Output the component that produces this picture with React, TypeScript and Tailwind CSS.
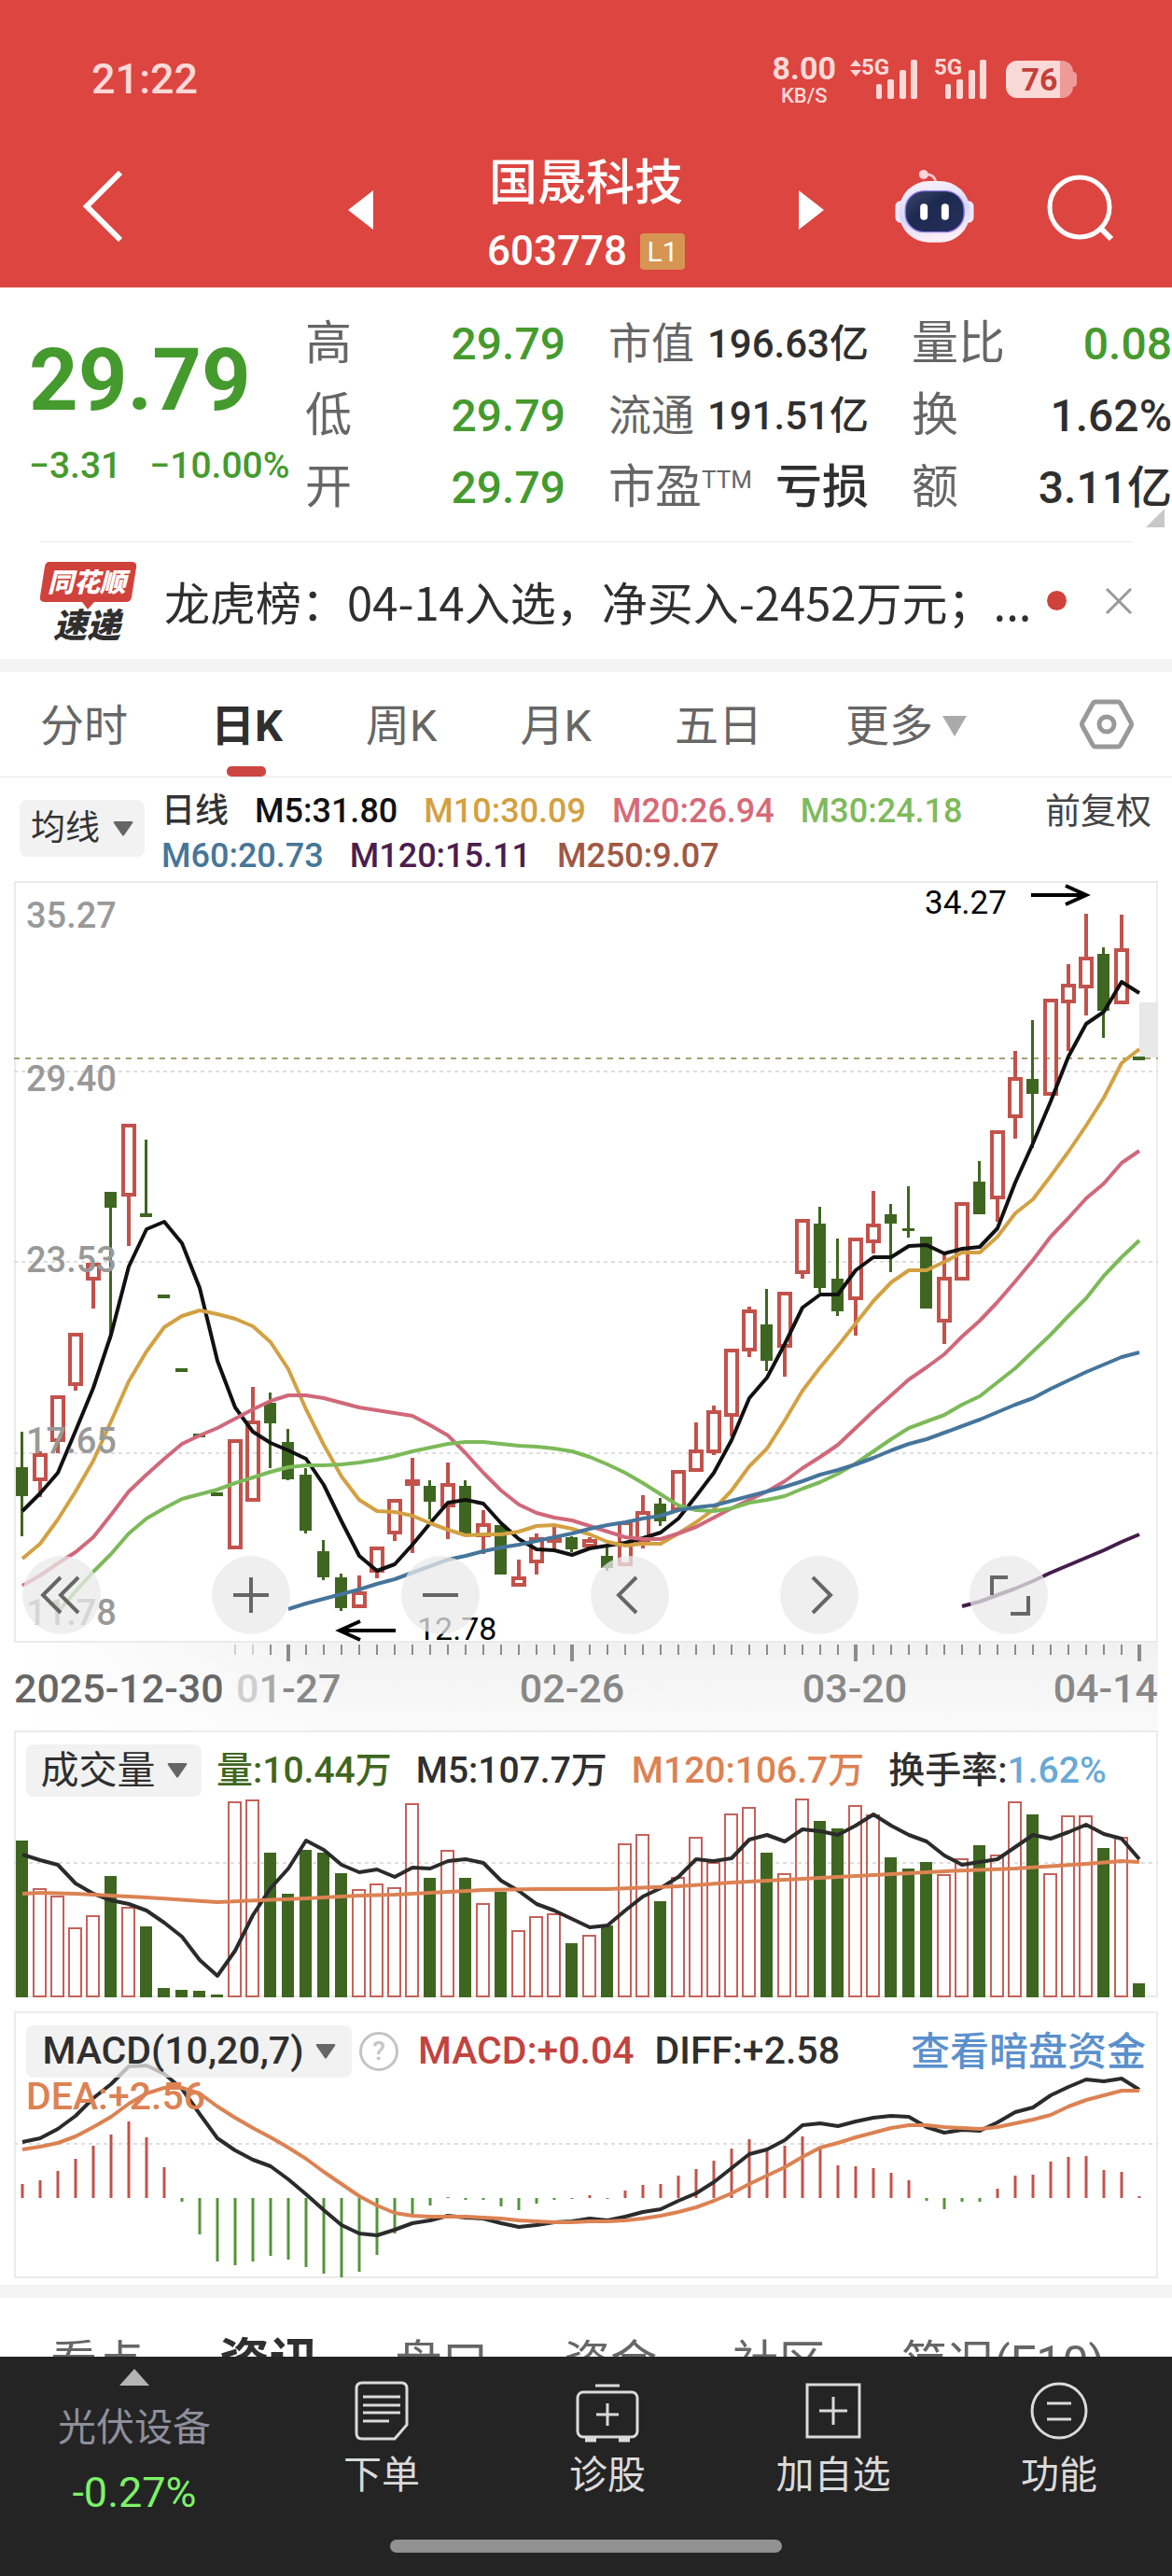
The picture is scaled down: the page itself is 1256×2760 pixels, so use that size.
import React from 'react';

type Candle = {
  up: boolean;
  high: number;
  top: number;
  bottom: number;
  low: number;
  solid?: boolean;
};

const RED = '#c2524b';
const GREEN = '#3f6621';
const STEP = 19;
const OFFSET = 9;

const cx = (i: number) => OFFSET + STEP * i;

const c = (dir: string, high: number, top: number, bottom: number, low: number): Candle => ({
  up: dir !== 'g',
  solid: dir === 's',
  high,
  top,
  bottom,
  low,
});

// high, body top, body bottom, low - in chart pixels from the top edge
const candles: Candle[] = [
  c('g', 590, 628, 659, 702),
  c('r', 611, 613, 643, 660),
  c('r', 551, 551, 601, 613),
  c('r', 484, 484, 541, 546),
  c('r', 409, 409, 428, 458),
  c('g', 333, 333, 350, 491),
  c('r', 260, 260, 338, 391),
  c('g', 277, 356, 360, 360),
  c('g', 443, 443, 447, 447),
  c('g', 522, 522, 526, 526),
  c('g', 592, 592, 596, 596),
  c('g', 655, 655, 659, 659),
  c('r', 598, 598, 716, 716),
  c('r', 542, 578, 665, 665),
  c('g', 548, 559, 581, 629),
  c('g', 587, 601, 641, 642),
  c('g', 629, 636, 696, 699),
  c('g', 706, 718, 746, 749),
  c('g', 742, 746, 779, 782),
  c('r', 744, 761, 779, 779),
  c('r', 713, 713, 741, 747),
  c('r', 662, 662, 700, 707),
  c('s', 618, 641, 648, 720),
  c('g', 642, 648, 665, 684),
  c('r', 623, 645, 671, 705),
  c('g', 642, 648, 701, 701),
  c('r', 674, 688, 703, 721),
  c('g', 690, 690, 743, 743),
  c('r', 727, 745, 756, 756),
  c('r', 699, 703, 731, 743),
  c('s', 691, 703, 708, 716),
  c('g', 702, 703, 716, 719),
  c('r', 703, 705, 714, 714),
  c('g', 714, 723, 736, 739),
  c('r', 686, 686, 734, 734),
  c('r', 658, 675, 709, 715),
  c('g', 661, 667, 686, 691),
  c('r', 631, 631, 675, 675),
  c('r', 580, 609, 633, 633),
  c('r', 562, 567, 613, 615),
  c('r', 501, 501, 574, 595),
  c('r', 456, 459, 504, 510),
  c('g', 437, 475, 514, 525),
  c('r', 440, 440, 500, 531),
  c('r', 362, 362, 421, 426),
  c('g', 349, 367, 436, 441),
  c('g', 383, 426, 461, 466),
  c('r', 382, 382, 449, 487),
  c('r', 332, 367, 388, 399),
  c('g', 346, 357, 367, 419),
  c('g', 327, 372, 375, 382),
  c('g', 381, 381, 458, 458),
  c('r', 399, 424, 473, 496),
  c('r', 344, 344, 428, 428),
  c('g', 300, 322, 357, 357),
  c('r', 267, 267, 341, 365),
  c('r', 182, 210, 254, 276),
  c('g', 149, 212, 228, 286),
  c('r', 126, 126, 230, 230),
  c('r', 89, 110, 131, 182),
  c('r', 35, 81, 115, 144),
  c('g', 71, 78, 139, 168),
  c('r', 36, 72, 132, 132),
  c('g', 188, 188, 192, 192),
];

const ma5 = [
  675, 656, 634, 589, 543, 486, 413, 373, 365, 388, 436, 514, 564, 590, 602, 610, 619, 647, 686, 723, 739, 732, 711,
  688, 666, 663, 667, 688, 705, 716, 717, 722, 715, 712, 709, 704, 698, 683, 659, 634, 599, 554, 532, 496, 457, 443,
  443, 417, 403, 403, 391, 390, 399, 394, 392, 372, 323, 281, 236, 188, 153, 140, 108, 120,
];
const ma10 = [
  726, 710, 684, 654, 621, 579, 536, 504, 478, 466, 460, 464, 469, 477, 494, 523, 566, 604, 638, 663, 675, 676, 680,
  688, 695, 701, 700, 700, 697, 691, 690, 694, 700, 708, 712, 710, 710, 699, 687, 673, 653, 627, 608, 578, 546, 521,
  498, 474, 450, 430, 417, 417, 408, 398, 398, 381, 356, 341, 316, 290, 262, 232, 195, 180,
];
const ma20 = [
  755, 744, 731, 719, 703, 679, 654, 636, 619, 603, 594, 586, 576, 566, 557, 551, 551, 554, 559, 564, 567, 570, 573,
  583, 594, 613, 634, 653, 668, 677, 682, 685, 691, 697, 703, 705, 705, 699, 692, 682, 672, 663, 654, 643, 629, 617,
  604, 586, 568, 551, 534, 521, 507, 488, 471, 451, 429, 406, 381, 361, 340, 324, 302, 289,
];
const ma30 = [
  783, 761, 740, 721, 699, 683, 672, 662, 657, 652, 645, 639, 633, 628, 626, 626, 625, 623, 620, 616, 611, 607, 603,
  601, 601, 603, 605, 606, 608, 611, 617, 625, 634, 645, 657, 669, 674, 675, 672, 666, 663, 659, 651, 644, 635, 624,
  611, 598, 586, 579, 572, 561, 552, 537, 522, 504, 486, 466, 447, 423, 403, 385,
];
const ma60 = [
  780, 774, 769, 764, 759, 753, 748, 741, 734, 727, 723, 718, 714, 711, 707, 703, 699, 694, 690, 687, 683, 680, 674,
  671, 669, 664, 659, 654, 649, 643, 636, 631, 625, 618, 610, 603, 598, 591, 584, 577, 569, 561, 554, 544, 535, 526,
  518, 510, 505,
];
const ma120 = [777, 772, 765, 758, 750, 741, 733, 725, 717, 708, 700];

const volumes = [
  118, 169, 177, 211, 198, 156, 189, 210, 276, 278, 279, 283, 76, 74, 131, 175, 128, 131, 153, 170, 164, 168, 78, 158,
  128, 158, 185, 173, 214, 199, 196, 228, 219, 209, 121, 111, 183, 157, 114, 141, 89, 82, 131, 153, 73, 97, 105, 80,
  90, 136, 148, 141, 154, 137, 123, 133, 76, 90, 153, 91, 91, 126, 114, 271,
];
const volMa5 = [
  133, 139, 144, 164, 175, 182, 186, 193, 206, 221, 246, 263, 236, 198, 169, 148, 118, 128, 144, 152, 149, 157, 147,
  148, 140, 138, 142, 161, 172, 186, 193, 202, 211, 209, 193, 178, 169, 157, 138, 140, 137, 117, 112, 119, 106, 108,
  112, 102, 90, 102, 112, 119, 134, 144, 141, 138, 125, 112, 116, 109, 101, 111, 116, 138,
];
const volMa120: [number, number][] = [
  [0, 175], [1, 174], [3, 175], [7, 179], [11, 184], [16, 180], [19, 177], [21, 176], [24, 173], [26, 171], [29, 170],
  [33, 170], [37, 167], [40, 163], [44, 159], [48, 155], [52, 151], [56, 148], [60, 143], [62, 140], [63, 141],
];

const macdBars = [
  185, 181, 171, 158, 144, 132, 118, 135, 167, 204, 239, 268, 272, 268, 262, 266, 274, 281, 285, 279, 261, 238, 218,
  208, 199, 202, 202, 209, 213, 206, 202, 201, 197, 201, 192, 186, 185, 176, 169, 160, 147, 137, 148, 144, 134, 147,
  165, 166, 168, 173, 181, 203, 212, 204, 204, 190, 176, 175, 161, 156, 155, 170, 172, 198,
];
const diff = [
  140, 136, 126, 112, 93, 78, 59, 58, 67, 83, 110, 136, 149, 159, 166, 180, 196, 213, 229, 238, 240, 234, 227, 224,
  219, 221, 222, 227, 231, 229, 226, 225, 222, 224, 220, 215, 212, 203, 195, 183, 168, 153, 148, 138, 122, 120, 123,
  118, 114, 112, 113, 124, 130, 127, 128, 119, 108, 103, 90, 81, 73, 75, 72, 84,
];
const dea = [
  148, 145, 141, 134, 124, 113, 99, 88, 82, 82, 88, 102, 114, 125, 135, 146, 158, 172, 185, 198, 208, 216, 219, 220,
  220, 220, 221, 222, 224, 225, 226, 226, 225, 225, 224, 222, 219, 215, 210, 203, 195, 185, 176, 167, 156, 146, 141,
  135, 130, 125, 122, 122, 124, 125, 126, 124, 120, 116, 111, 102, 95, 90, 85, 85,
];

const Line = ({ data, color, start = 0 }: { data: number[]; color: string; start?: number }) => (
  <polyline
    points={data.map((y, i) => `${cx(i + start)},${y}`).join(' ')}
    fill="none"
    stroke={color}
    strokeWidth="4"
    strokeLinejoin="round"
  />
);

const Caret = ({ className = '' }: { className?: string }) => (
  <svg viewBox="0 0 22 16" className={`w-[22px] h-4 ${className}`} fill="currentColor">
    <path d="M2 0h18q2 0 1 2L12 15q-1 1-2 0L1 2Q0 0 2 0z" />
  </svg>
);

const Signal = () => (
  <svg viewBox="0 0 44 42" className="w-11 h-[42px]" fill="currentColor">
    <rect x="0" y="26" width="6" height="16" rx="2" />
    <rect x="12" y="21" width="7" height="21" rx="2" />
    <rect x="25" y="11" width="7" height="31" rx="2" />
    <rect x="37" y="0" width="7" height="42" rx="2" />
  </svg>
);

const StatusBar = () => (
  <div className="flex items-center h-[150px] pt-5 pl-[98px] pr-[102px] text-[#fbd9d7]">
    <span className="text-[45px] leading-[50px] font-medium">21:22</span>
    <div className="ml-auto flex items-center">
      <div className="flex flex-col items-center font-bold">
        <span className="text-[34px] leading-9">8.00</span>
        <span className="text-[22px] leading-6 font-medium">KB/S</span>
      </div>
      <div className="relative ml-[43px]">
        <Signal />
        <span className="absolute -left-4 -top-1 text-[24px] leading-6 font-bold">5G</span>
        <svg viewBox="0 0 12 18" className="absolute -left-7 top-0 w-3 h-[18px]" fill="currentColor">
          <path d="M6 0l6 7H0zM6 18l6-7H0z" />
        </svg>
      </div>
      <div className="relative ml-[30px]">
        <Signal />
        <span className="absolute -left-3 -top-1 text-[24px] leading-6 font-bold">5G</span>
      </div>
      <div className="ml-[21px] flex items-center">
        <div className="w-[72px] h-10 rounded-[12px] bg-[linear-gradient(to_right,#fbd9d7_58px,#ee9a97_58px)] flex items-center justify-center">
          <span className="text-[34px] leading-10 font-bold text-[#c2403b]">76</span>
        </div>
        <div className="w-1 h-4 rounded-r bg-[#ee9a97]" />
      </div>
    </div>
  </div>
);

const Robot = () => (
  <svg viewBox="38 25 260 240" className="w-[87px] h-20">
    <defs>
      <linearGradient id="shell" x1="0" y1="0" x2="0.2" y2="1">
        <stop offset="0" stopColor="#fdf3fa" />
        <stop offset="0.6" stopColor="#d6d8fa" />
        <stop offset="1" stopColor="#fbeef6" />
      </linearGradient>
      <linearGradient id="visor" x1="0" y1="0" x2="1" y2="1">
        <stop offset="0" stopColor="#3d466b" />
        <stop offset="0.4" stopColor="#1d2a50" />
        <stop offset="1" stopColor="#26305c" />
      </linearGradient>
    </defs>
    <path d="M172 70q-2-30-38-28" fill="none" stroke="#f9c6cc" strokeWidth="8" />
    <circle cx="133" cy="43" r="15" fill="#fbd5da" />
    <rect x="42" y="128" width="40" height="70" rx="16" fill="#f3e6f8" />
    <rect x="254" y="128" width="40" height="70" rx="16" fill="#f3e6f8" />
    <rect x="54" y="64" width="228" height="197" rx="96" fill="url(#shell)" />
    <rect x="74" y="96" width="189" height="132" rx="60" fill="url(#visor)" stroke="#8b7be8" strokeWidth="4" />
    <rect x="122" y="137" width="24" height="52" rx="12" fill="#fff" />
    <rect x="190" y="137" width="24" height="52" rx="12" fill="#fff" />
  </svg>
);

const TitleBar = () => (
  <div className="flex items-center h-[158px] pl-[88px] pr-[62px]">
    <button aria-label="返回" className="pb-4">
      <svg viewBox="0 0 44 76" className="w-11 h-[76px]" fill="none" stroke="#fff" strokeWidth="6">
        <path d="M41 2L5 38l36 36" />
      </svg>
    </button>
    <div className="ml-auto flex items-center w-[510px] justify-between">
      <button aria-label="上一只" className="pb-2">
        <svg viewBox="0 0 27 42" className="w-[27px] h-[42px]" fill="#fff"><path d="M27 0v42L0 21z" /></svg>
      </button>
      <div className="flex flex-col items-center text-white pt-1">
        <h1 className="text-[52px] leading-[76px] font-medium">国晟科技</h1>
        <div className="flex items-center gap-3.5 h-[68px]">
          <span className="text-[44px] leading-[50px] font-medium">603778</span>
          <span className="w-12 h-[39px] rounded-[4px] bg-[#d69553] text-[30px] leading-[39px] text-center">L1</span>
        </div>
      </div>
      <button aria-label="下一只" className="pb-2">
        <svg viewBox="0 0 27 42" className="w-[27px] h-[42px]" fill="#fff"><path d="M0 0v42l27-21z" /></svg>
      </button>
    </div>
    <button aria-label="智能助手" className="ml-[75px] pb-4"><Robot /></button>
    <button aria-label="搜索" className="ml-[77px] pb-3">
      <svg viewBox="0 0 72 72" className="w-[72px] h-[72px]" fill="none" stroke="#fff" strokeWidth="5">
        <circle cx="35" cy="35" r="32" />
        <path d="M57 57l12 12" strokeWidth="6" />
      </svg>
    </button>
  </div>
);

const Stat = ({ label, sup, value, className = 'text-[#2f2f2f]' }: { label: string; sup?: string; value: string; className?: string }) => (
  <div className="flex items-center justify-between h-[77px] whitespace-nowrap">
    <dt className="text-[50px] leading-[77px] text-[#666] flex">
      {label}
      {sup && <sup className="text-[26px] leading-[60px] top-0">{sup}</sup>}
    </dt>
    <dd className={`leading-[77px] font-medium ${className}`}>{value}</dd>
  </div>
);

const Quote = () => (
  <section className="relative flex pt-[22px] pb-[19px]">
    <div className="w-[327px] shrink-0 pl-[31px] pt-6 text-[#459a2e] whitespace-nowrap">
      <p className="text-[92px] leading-[108px] font-bold">29.79</p>
      <p className="mt-3 flex gap-[30px] text-[39px] leading-[50px] font-medium">
        <span>−3.31</span>
        <span>−10.00%</span>
      </p>
    </div>
    <dl className="flex-1 grid grid-cols-3 gap-x-[46px]">
      <div>
        <Stat label="高" value="29.79" className="text-[48px] text-[#459a2e]" />
        <Stat label="低" value="29.79" className="text-[48px] text-[#459a2e]" />
        <Stat label="开" value="29.79" className="text-[48px] text-[#459a2e]" />
      </div>
      <div>
        <div className="[&_dt]:text-[46px]">
          <Stat label="市值" value="196.63亿" className="text-[42px] text-[#2f2f2f]" />
          <Stat label="流通" value="191.51亿" className="text-[42px] text-[#2f2f2f]" />
        </div>
        <Stat label="市盈" sup="TTM" value="亏损" className="text-[50px] text-[#2f2f2f]" />
      </div>
      <div>
        <Stat label="量比" value="0.08" className="text-[48px] text-[#459a2e]" />
        <Stat label="换" value="1.62%" className="text-[48px] text-[#2f2f2f]" />
        <Stat label="额" value="3.11亿" className="text-[48px] text-[#2f2f2f]" />
      </div>
    </dl>
    <svg viewBox="0 0 20 20" className="absolute right-2 bottom-[15px] w-5 h-5" fill="#c8c8c8"><path d="M20 0v20H0z" /></svg>
  </section>
);

const Notice = () => (
  <section className="flex items-center h-[126px] mx-[43px] border-t border-[#e8e8e8]">
    <svg viewBox="0 0 104 86" className="w-[104px] h-[86px] shrink-0" aria-label="同花顺速递">
      <path d="M10 1h88q6 0 5 6l-5 32q-1 5-6 5H58l-7 8-6-8H5q-6 0-5-6L5 6q1-5 5-5z" fill="#d0423c" />
      <text x="50" y="33" textAnchor="middle" fontSize="28" fontWeight="900" fontStyle="italic" fill="#fff">同花顺</text>
      <text x="50" y="82" textAnchor="middle" fontSize="36" fontWeight="900" fontStyle="italic" fill="#2f2f2f">速递</text>
    </svg>
    <p className="ml-[29px] flex-1 truncate font-['Noto_Sans_CJK_SC',sans-serif] text-[49px] leading-[76px] text-[#2f2f2f]">
      龙虎榜：04-14入选，净买入-2452万元；...
    </p>
    <span className="w-[21px] h-[21px] shrink-0 rounded-full bg-[#d0423c]" />
    <button aria-label="关闭" className="ml-[42px]">
      <svg viewBox="0 0 28 28" className="w-7 h-7" stroke="#999" strokeWidth="3"><path d="M1 1l26 26M27 1L1 27" /></svg>
    </button>
  </section>
);

const periods = ['分时', '日K', '周K', '月K', '五日'];

const PeriodTabs = () => (
  <nav className="flex h-[113px] pl-[43px] pr-[41px] gap-[89px] items-stretch border-b border-[#e6e6e6] text-[47px] text-[#666]">
    {periods.map((p) => (
      <button key={p} className={p === '日K' ? 'relative pt-1 font-bold text-[#2f2f2f]' : 'pt-1'}>
        {p}
        {p === '日K' && <span className="absolute left-1/2 -translate-x-1/2 bottom-0 w-[42px] h-[11px] rounded-[5px] bg-[#cc4540]" />}
      </button>
    ))}
    <button className="flex items-center gap-2.5 pt-1">
      更多
      <svg viewBox="0 0 26 22" className="w-[26px] h-[22px]" fill="#aaa"><path d="M0 0h26L13 22z" /></svg>
    </button>
    <button aria-label="设置" className="ml-auto">
      <svg viewBox="0 0 58 54" className="w-[58px] h-[54px]" fill="none" stroke="#999" strokeWidth="5" strokeLinejoin="round">
        <path d="M17 3h24q2 0 3 2l11 20q1 2 0 4L44 49q-1 2-3 2H17q-2 0-3-2L3 29q-1-2 0-4L14 5q1-2 3-2z" />
        <circle cx="29" cy="27" r="8" />
      </svg>
    </button>
  </nav>
);

const Legend = () => (
  <div className="flex items-start h-[111px] pt-3 pl-[21px] pr-[22px]">
    <button className="mt-3 h-[61px] w-[134px] shrink-0 rounded-lg bg-[#f2f2f2] flex items-center justify-center gap-3.5 text-[37px] text-[#333]">
      均线
      <Caret className="text-[#666]" />
    </button>
    <div className="ml-[18px] flex-1 text-[36px] leading-[48px] font-medium whitespace-nowrap">
      <div className="flex gap-7">
        <span className="text-[#333]">日线</span>
        <span className="text-[#111]">M5:31.80</span>
        <span className="text-[#d3a142]">M10:30.09</span>
        <span className="text-[#d66a78]">M20:26.94</span>
        <span className="text-[#7fba5c]">M30:24.18</span>
      </div>
      <div className="flex gap-7">
        <span className="text-[#477699]">M60:20.73</span>
        <span className="text-[#4a1e4f]">M120:15.11</span>
        <span className="text-[#a05844]">M250:9.07</span>
      </div>
    </div>
    <button className="text-[38px] leading-[48px] text-[#444]">前复权</button>
  </div>
);

const priceLabels = [
  { y: 50, text: '35.27' },
  { y: 225, text: '29.40' },
  { y: 419, text: '23.53' },
  { y: 613, text: '17.65' },
  { y: 797, text: '11.78' },
];

const tools = [
  { name: '最早', d: 'M41 29L22 48l19 19M60 29L41 48l19 19' },
  { name: '放大', d: 'M42 23v38M23 42h38' },
  { name: '缩小', d: 'M23 42h38' },
  { name: '左移', d: 'M49 23L30 42l19 19' },
  { name: '右移', d: 'M35 23l19 19-19 19' },
  { name: '全屏', d: 'M41 23H24v19M44 62h19V43' },
];

const KLine = () => (
  <div className="relative mx-[15px]">
    <svg viewBox="0 0 1226 816" className="block w-full">
      <rect x="1" y="1" width="1224" height="814" fill="none" stroke="#ebebeb" strokeWidth="2" />
      {[204, 408, 613].map((y) => (
        <line key={y} x1="0" x2="1226" y1={y} y2={y} stroke="#dedede" strokeWidth="2" strokeDasharray="4 4" />
      ))}
      <rect x="1206" y="130" width="20" height="59" fill="#e8e8e8" />
      <line x1="0" x2="1226" y1="190" y2="190" stroke="#a3a473" strokeWidth="2" strokeDasharray="6 6" />
      {candles.map((k, i) =>
        k.up ? (
          <g key={i} stroke={RED} strokeWidth="4" fill={k.solid ? RED : 'none'}>
            {k.high < k.top && <line x1={cx(i)} x2={cx(i)} y1={k.high} y2={k.top} />}
            {k.low > k.bottom && <line x1={cx(i)} x2={cx(i)} y1={k.bottom} y2={k.low} />}
            <rect x={cx(i) - 6} y={k.top + 2} width="12" height={Math.max(k.bottom - k.top - 4, 2)} />
          </g>
        ) : (
          <g key={i} fill={GREEN}>
            <rect x={cx(i) - 2} y={k.high} width="3" height={k.low - k.high} />
            <rect x={cx(i) - 7} y={k.top} width="13" height={k.bottom - k.top} />
          </g>
        )
      )}
      <Line data={ma5} color="#111" />
      <Line data={ma10} color="#d3a142" />
      <Line data={ma20} color="#d0687a" />
      <Line data={ma30} color="#7cba59" start={2} />
      <Line data={ma60} color="#45759b" start={15} />
      <Line data={ma120} color="#451c4c" start={53} />
      {priceLabels.map((p) => (
        <text key={p.text} x="13" y={p.y} fontSize="38" fontWeight="500" fill="#999">{p.text}</text>
      ))}
      <text x="976" y="35" fontSize="35" fill="#000">34.27</text>
      <path d="M1090 15h58M1127 5l22 10-22 10" fill="none" stroke="#000" strokeWidth="4" />
      <text x="432" y="813" fontSize="34" fill="#000">12.78</text>
      <path d="M409 803h-58M371 793l-22 10 22 10" fill="none" stroke="#000" strokeWidth="4" />
    </svg>
    <div className="absolute left-[9px] right-[118px] bottom-[9px] flex justify-between">
      {tools.map((t) => (
        <button key={t.name} aria-label={t.name} className="w-[84px] h-[84px] rounded-full bg-[#e9e9e9]/75">
          <svg
            viewBox={t.name === '最早' ? '0 6 84 84' : '0 0 84 84'}
            className="w-full h-full"
            fill="none"
            stroke="#666"
            strokeWidth="4"
          >
            <path d={t.d} />
          </svg>
        </button>
      ))}
    </div>
  </div>
);

const DateAxis = () => (
  <div className="mx-[15px] bg-[linear-gradient(to_right,#fff,transparent_30%),linear-gradient(to_bottom,#f1f1f1,#fafafa)]">
    <svg viewBox="0 0 1226 94" className="block w-full" fontSize="43" fontWeight="500" fill="#888">
      {candles.map((_, i) => {
        if (i < 12) return null;
        const major = i % 16 === 15;
        return (
          <line
            key={i}
            x1={cx(i)}
            x2={cx(i)}
            y1="2"
            y2={major ? 20 : 13}
            stroke={i < 14 ? '#d0d0d0' : '#8c8c8c'}
            strokeWidth={major ? 4 : 2}
          />
        );
      })}
      <text x="0" y="64" fill="#666">2025-12-30</text>
      <text x="238" y="64"><tspan fill="#cfcfcf">0</tspan><tspan fill="#aaa">1</tspan>-27</text>
      <text x="598" y="64" textAnchor="middle">02-26</text>
      <text x="901" y="64" textAnchor="middle">03-20</text>
      <text x="1226" y="64" textAnchor="end">04-14</text>
    </svg>
  </div>
);

const Volume = () => (
  <section className="relative mx-[15px]">
    <svg viewBox="0 0 1226 286" className="block w-full">
      <rect x="1" y="1" width="1224" height="284" fill="none" stroke="#ebebeb" strokeWidth="2" />
      <line x1="0" x2="1226" y1="142" y2="142" stroke="#dedede" strokeWidth="2" strokeDasharray="4 4" />
      {volumes.map((y, i) =>
        candles[i].up ? (
          <rect key={i} x={cx(i) - 7} y={y + 1} width="13" height={284 - y} fill="none" stroke="#c4625b" strokeWidth="2" />
        ) : (
          <rect key={i} x={cx(i) - 7} y={y} width="13" height={286 - y} fill={GREEN} />
        )
      )}
      <Line data={volMa5} color="#2b2b2b" />
      <polyline
        points={volMa120.map(([i, y]) => `${cx(i)},${y}`).join(' ')}
        fill="none"
        stroke="#dc8253"
        strokeWidth="4"
      />
    </svg>
    <div className="absolute left-[13px] top-[15px] flex items-center gap-[26px] text-[39px] leading-[56px] font-medium whitespace-nowrap text-[#2f2f2f]">
      <button className="h-14 w-[188px] -mr-2.5 rounded-lg bg-[#ededed]/75 flex items-center justify-center gap-3 text-[41px] font-normal">
        成交量
        <Caret className="text-[#666]" />
      </button>
      <span className="text-[#3f6621]">量:10.44万</span>
      <span>M5:107.7万</span>
      <span className="text-[#dc8253]">M120:106.7万</span>
      <span>换手率:<span className="text-[#68a9d6]">1.62%</span></span>
    </div>
  </section>
);

const Macd = () => (
  <section className="relative mx-[15px] mt-[15px]">
    <svg viewBox="0 0 1226 286" className="block w-full">
      <rect x="1" y="1" width="1224" height="284" fill="none" stroke="#ebebeb" strokeWidth="2" />
      <line x1="0" x2="1226" y1="142" y2="142" stroke="#dedede" strokeWidth="2" strokeDasharray="4 4" />
      {macdBars.map((y, i) => (
        <line key={i} x1={cx(i)} x2={cx(i)} y1="200" y2={y} stroke={y < 200 ? '#c2524b' : '#54953a'} strokeWidth="3" />
      ))}
      <Line data={diff} color="#2b2b2b" />
      <Line data={dea} color="#dc8253" />
    </svg>
    <div className="absolute inset-x-0 top-[15px] px-[13px] text-[41px] font-medium text-[#2f2f2f] whitespace-nowrap">
      <div className="flex items-center h-14">
        <button className="h-14 w-[349px] rounded-lg bg-[#ededed]/75 flex items-center justify-center gap-3 text-[#2f2f2f]">
          MACD(10,20,7)
          <Caret className="text-[#666]" />
        </button>
        <button aria-label="说明" className="ml-2 w-[42px] h-[42px] rounded-full border-[3px] border-[#c4c4c4] text-[28px] leading-9 text-[#c4c4c4]">?</button>
        <span className="ml-[21px] text-[#c2433f]">MACD:+0.04</span>
        <span className="ml-[22px]">DIFF:+2.58</span>
        <a href="#" className="ml-auto text-[42px] text-[#5b90cc]">查看暗盘资金</a>
      </div>
      <p className="leading-[40px] text-[#dc8253]">DEA:+2.56</p>
    </div>
  </section>
);

const sections = ['看点', '资讯', '盘口', '资金', '社区', '简况(F10)'];

const SectionTabs = () => (
  <nav className="flex justify-between items-start h-[63px] pt-[34px] pl-[54px] pr-[72px] overflow-hidden text-[50px] leading-[72px] text-[#666]">
    {sections.map((s) => (
      <button key={s} className={s === '资讯' ? 'text-[54px] font-bold text-[#2f2f2f]' : ''}>{s}</button>
    ))}
  </nav>
);

const actions = [
  {
    label: '下单',
    icon: (
      <>
        <path d="M11 3h42q6 0 6 6v39L46 63H11q-6 0-6-6V9q0-6 6-6z" />
        <path d="M12 18h40M12 27h40M12 35h40M12 44h28" strokeWidth="3" />
      </>
    ),
  },
  {
    label: '诊股',
    icon: (
      <>
        <path d="M19 6h26" />
        <rect x="0" y="13" width="64" height="48" rx="6" />
        <path d="M32 25v24M20 37h24" />
        <path d="M8 64h12M44 64h12" strokeWidth="5" />
      </>
    ),
  },
  {
    label: '加自选',
    icon: (
      <>
        <rect x="4" y="5" width="56" height="56" />
        <path d="M32 18v30M17 33h30" />
      </>
    ),
  },
  {
    label: '功能',
    icon: (
      <>
        <circle cx="32" cy="33" r="29" />
        <path d="M19 25h26M19 42h26" />
      </>
    ),
  },
];

const BottomBar = () => (
  <footer className="bg-[#242424] h-[235px] text-[41px]">
    <div className="flex h-[196px]">
      <button className="w-[288px] flex flex-col items-center pt-[13px]">
        <svg viewBox="0 0 32 18" className="w-8 h-[18px]" fill="#b4b4b4"><path d="M16 0l16 18H0z" /></svg>
        <span className="mt-[15px] leading-[60px] text-[#8f8f9c]">光伏设备</span>
        <span className="mt-3 text-[45px] leading-[56px] text-[#7df267]">-0.27%</span>
      </button>
      {actions.map((a) => (
        <button key={a.label} className="flex-1 flex flex-col items-center pt-[25px] text-[#dadada]">
          <svg viewBox="-2 0 68 68" className="w-[68px] h-[68px]" fill="none" stroke="currentColor" strokeWidth="3">{a.icon}</svg>
          <span className="mt-1 leading-[60px]">{a.label}</span>
        </button>
      ))}
    </div>
    <div className="mx-auto w-[420px] h-3.5 rounded-full bg-[#929292]" />
  </footer>
);

const App: React.FC = () => {
  return (
    <div className="bg-white font-['Roboto','Noto_Sans_CJK_SC',sans-serif]">
      <header className="bg-[#dd4540]">
        <StatusBar />
        <TitleBar />
      </header>
      <main>
        <Quote />
        <Notice />
        <div className="h-3.5 bg-[#f4f4f4]" />
        <PeriodTabs />
        <Legend />
        <KLine />
        <DateAxis />
        <Volume />
        <Macd />
        <div className="mt-[7px] h-3.5 bg-[#f4f4f4]" />
        <SectionTabs />
      </main>
      <BottomBar />
    </div>
  );
};

export default App;
